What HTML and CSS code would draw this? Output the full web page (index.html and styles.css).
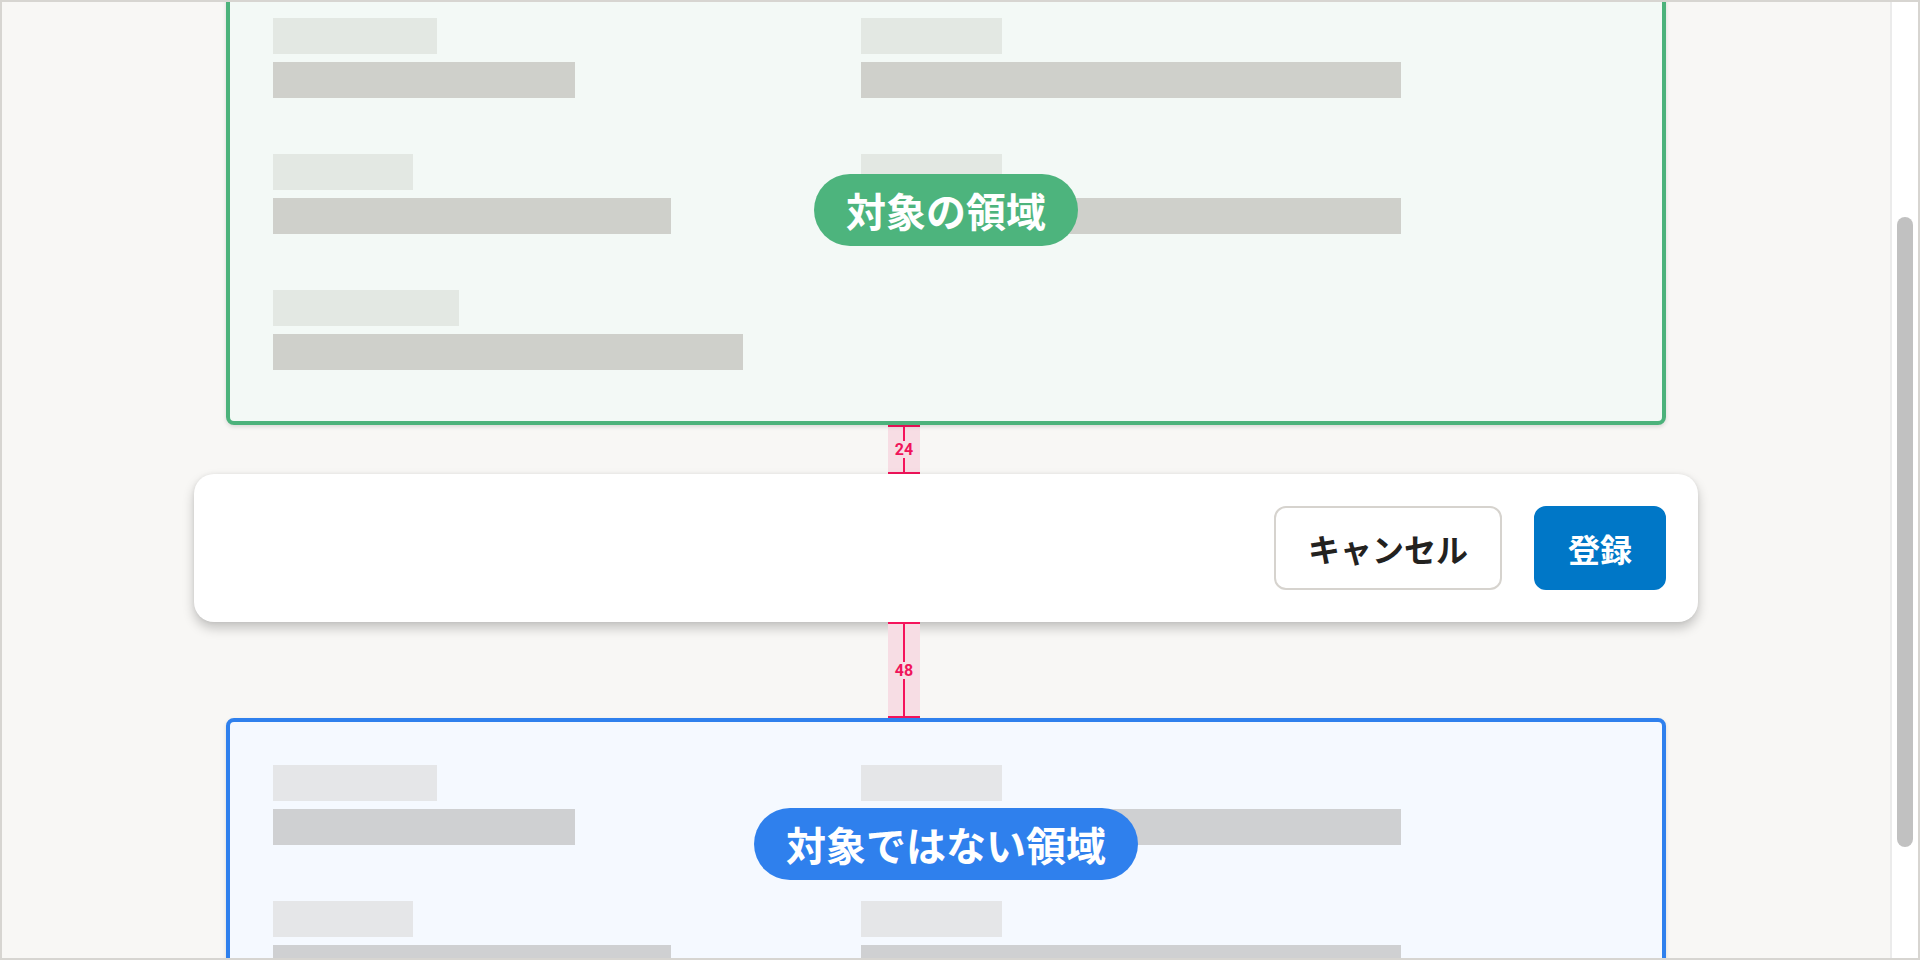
FILE: index.html
```html
<!DOCTYPE html>
<html lang="ja">
<head>
<meta charset="utf-8">
<title>対象の領域</title>
<link rel="stylesheet" href="styles.css">
</head>
<body>
<div class="frame">
  <div class="viewport">
    <section class="area area-target">
      <div class="fields">
        <div class="field"><div class="ph-label" style="width:164px"></div><div class="ph-value" style="width:302px"></div></div>
        <div class="field"><div class="ph-label" style="width:141px"></div><div class="ph-value" style="width:540px"></div></div>
        <div class="field"><div class="ph-label" style="width:140px"></div><div class="ph-value" style="width:398px"></div></div>
        <div class="field"><div class="ph-label" style="width:141px"></div><div class="ph-value" style="width:540px"></div></div>
        <div class="field"><div class="ph-label" style="width:186px"></div><div class="ph-value" style="width:470px"></div></div>
      </div>
      <span class="badge badge-green">対象の領域</span>
    </section>

    <div class="gap gap-24">
      <div class="measure"><span class="cap"></span><span class="line"></span><span class="num">24</span><span class="line"></span><span class="cap"></span></div>
    </div>

    <div class="action-bar">
      <button class="btn btn-secondary" type="button">キャンセル</button>
      <button class="btn btn-primary" type="button">登録</button>
    </div>

    <div class="gap gap-48">
      <div class="measure"><span class="cap"></span><span class="line"></span><span class="num">48</span><span class="line"></span><span class="cap"></span></div>
    </div>

    <section class="area area-other">
      <div class="fields">
        <div class="field"><div class="ph-label" style="width:164px"></div><div class="ph-value" style="width:302px"></div></div>
        <div class="field"><div class="ph-label" style="width:141px"></div><div class="ph-value" style="width:540px"></div></div>
        <div class="field"><div class="ph-label" style="width:140px"></div><div class="ph-value" style="width:398px"></div></div>
        <div class="field"><div class="ph-label" style="width:141px"></div><div class="ph-value" style="width:540px"></div></div>
        <div class="field"><div class="ph-label" style="width:186px"></div><div class="ph-value" style="width:470px"></div></div>
      </div>
      <span class="badge badge-blue">対象ではない領域</span>
    </section>
  </div>
  <div class="scrollbar"><div class="thumb"></div></div>
</div>
</body>
</html>
```

FILE: styles.css
```css
* { box-sizing: border-box; }

html, body {
  margin: 0;
  padding: 0;
  width: 1920px;
  height: 960px;
  overflow: hidden;
  font-family: "Noto Sans CJK JP", "Noto Sans", sans-serif;
}

.frame {
  width: 1920px;
  height: 960px;
  border: 2px solid #d7d5d1;
  display: flex;
  background: #f8f7f5;
}

.viewport {
  flex: 1;
  overflow: hidden;
  display: flex;
  flex-direction: column;
  align-items: center;
}

.scrollbar {
  width: 28px;
  background: #ffffff;
  border-left: 2px solid #ebebeb;
  padding-top: 215px;
  padding-left: 5px;
}

.thumb {
  width: 16px;
  height: 630px;
  border-radius: 8px;
  background: #c1c1c1;
}

.area {
  position: relative;
  flex: none;
  width: 1440px;
  border: 4px solid;
  border-radius: 8px;
  padding: 43px 43px 51px;
  box-shadow: 0 2px 4px rgba(0, 0, 0, 0.12);
}

.area-target {
  margin-top: -31px;
  border-color: #4cb27b;
  background: #f3f9f6;
}

.area-other {
  border-color: #2f80ed;
  background: #f5f9ff;
}

.fields {
  display: grid;
  grid-template-columns: 588px 540px;
  row-gap: 56px;
}

.field {
  display: flex;
  flex-direction: column;
  gap: 8px;
}

.ph-label, .ph-value { height: 36px; }

.area-target .ph-label { background: #e3e8e3; }
.area-target .ph-value { background: #cfd0cb; }
.area-other .ph-label { background: #e5e6e8; }
.area-other .ph-value { background: #cfd0d2; }

.badge {
  position: absolute;
  left: 50%;
  transform: translateX(-50%);
  height: 72px;
  line-height: 72px;
  padding: 0 32px;
  border-radius: 36px;
  color: #ffffff;
  font-size: 40px;
  font-weight: 700;
  white-space: nowrap;
}

.badge-green { top: 199px; background: #4db47d; }
.badge-blue { top: 86px; background: #2f80ed; }

.gap {
  flex: none;
  width: 100%;
  padding-left: 886px;
}

.gap-24 { height: 49px; }
.gap-48 { height: 96px; }

.measure {
  width: 32px;
  height: 100%;
  background: #f7dde4;
  display: flex;
  flex-direction: column;
  align-items: center;
}

.measure .cap {
  width: 32px;
  height: 2px;
  background: #f5145c;
  flex: none;
}

.measure .line {
  width: 2px;
  flex: 1;
  background: #f5145c;
}

.measure .num {
  flex: none;
  padding: 1px 0;
  font-family: Roboto, "Liberation Sans", sans-serif;
  font-weight: 700;
  font-size: 16px;
  line-height: 15px;
  color: #f0145a;
}

.action-bar {
  flex: none;
  width: 1504px;
  height: 148px;
  background: #ffffff;
  border-radius: 20px;
  padding: 32px;
  display: flex;
  justify-content: flex-end;
  align-items: center;
  gap: 32px;
  box-shadow: 0 6px 12px rgba(0, 0, 0, 0.22), 0 0 4px rgba(0, 0, 0, 0.06);
}

.btn {
  height: 84px;
  padding: 0 32px;
  border: 2px solid transparent;
  border-radius: 12px;
  font-family: "Noto Sans CJK JP", "Noto Sans", sans-serif;
  font-size: 32px;
  font-weight: 700;
  line-height: 1;
  cursor: pointer;
}

.btn-secondary {
  background: #ffffff;
  border-color: #d6d3ce;
  color: #23221f;
}

.btn-primary {
  background: #0077c7;
  border-color: #0077c7;
  color: #ffffff;
}
```
